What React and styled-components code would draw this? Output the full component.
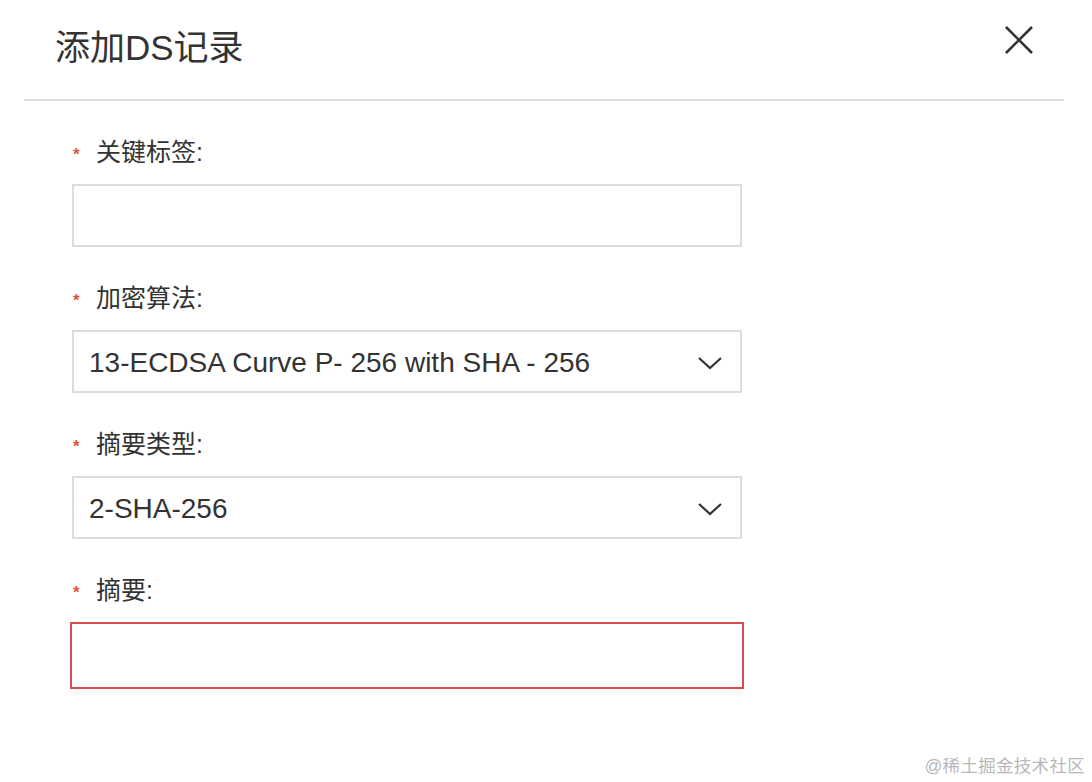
import React from 'react';
import styled, { createGlobalStyle } from 'styled-components';

const GlobalStyle = createGlobalStyle`
    html, body {
        margin: 0;
        padding: 0;
        background: #fff;
    }
    body {
        font-family: "Liberation Sans", "Noto Sans CJK SC", sans-serif;
        color: #333;
    }
`

const Page = styled.div`
    width: 1092px;
    height: 782px;
    position: relative;
    overflow: hidden;
`

const Header = styled.div`
    margin: 0 28px 0 24px;
    height: 99px;
    border-bottom: 2px solid #dedede;
    display: flex;
    flex-direction: row;
    align-items: flex-start;
    justify-content: space-between;
`

const Title = styled.h2`
    margin: 0;
    padding: 26px 0 0 31px;
    font-size: 35px;
    line-height: 44px;
    font-weight: 400;
    color: #333;
`

const Close = styled.button`
    background: none;
    border: none;
    outline: none;
    padding: 0;
    margin: 24px 29px 0 0;
    width: 32px;
    height: 32px;
    display: flex;
    align-items: center;
    justify-content: center;
    cursor: pointer;
`

const Form = styled.form`
    display: block;
    padding: 34px 0 0 72px;
    width: 670px;
`

const Field = styled.div`
    margin-bottom: 34px;
`

const Label = styled.label`
    display: flex;
    flex-direction: row;
    align-items: center;
    height: 30px;
    font-size: 25px;
    color: #333;
    margin-bottom: 19px;
    span {
        color: #e0533d;
        font-size: 17px;
        font-weight: 700;
        width: 23px;
        padding-left: 1px;
        padding-top: 9px;
    }
`

const Input = styled.input`
    display: block;
    box-sizing: border-box;
    width: ${p => p.error ? '674px' : '670px'};
    height: ${p => p.error ? '67px' : '63px'};
    margin: ${p => p.error ? '0 0 0 -2px' : '0'};
    border: 2px solid ${p => p.error ? '#dc4c4c' : '#dcdcdc'};
    border-radius: 0;
    outline: none;
    background: #fff;
    font-size: 28px;
    padding: 0 15px;
`

const Select = styled.div`
    box-sizing: border-box;
    width: 670px;
    height: 63px;
    border: 2px solid #dcdcdc;
    display: flex;
    flex-direction: row;
    align-items: center;
    justify-content: space-between;
    padding: 3px 17px 0 15px;
    font-size: 28px;
    color: #333;
`

const Watermark = styled.div`
    position: absolute;
    right: 7px;
    bottom: 5px;
    font-size: 17.5px;
    color: #b8b8b8;
    letter-spacing: 0.3px;
`

const Chevron = () => (
    <svg width="26" height="16" viewBox="0 0 26 16">
        <path d="M2 3 L13 13 L24 3" fill="none" stroke="#333" strokeWidth="2.2" />
    </svg>
)

const fields = [
    { label: '关键标签:', kind: 'input' },
    { label: '加密算法:', kind: 'select', value: '13-ECDSA Curve P- 256 with SHA - 256' },
    { label: '摘要类型:', kind: 'select', value: '2-SHA-256' },
    { label: '摘要:', kind: 'input', error: true },
]

class App extends React.Component {
    render() {
        return (
            <Page>
                <GlobalStyle />
                <Header>
                    <Title>添加DS记录</Title>
                    <Close type="button" aria-label="close">
                        <svg width="30" height="30" viewBox="0 0 30 30">
                            <path d="M2 2 L28 28 M28 2 L2 28" stroke="#333" strokeWidth="2.6" />
                        </svg>
                    </Close>
                </Header>
                <Form>
                    {fields.map((f, i) => (
                        <Field key={i}>
                            <Label><span>*</span>{f.label}</Label>
                            {f.kind === 'input'
                                ? <Input error={f.error} />
                                : <Select>{f.value}<Chevron /></Select>}
                        </Field>
                    ))}
                </Form>
                <Watermark>@稀土掘金技术社区</Watermark>
            </Page>
        );
    }
}

export default App;
